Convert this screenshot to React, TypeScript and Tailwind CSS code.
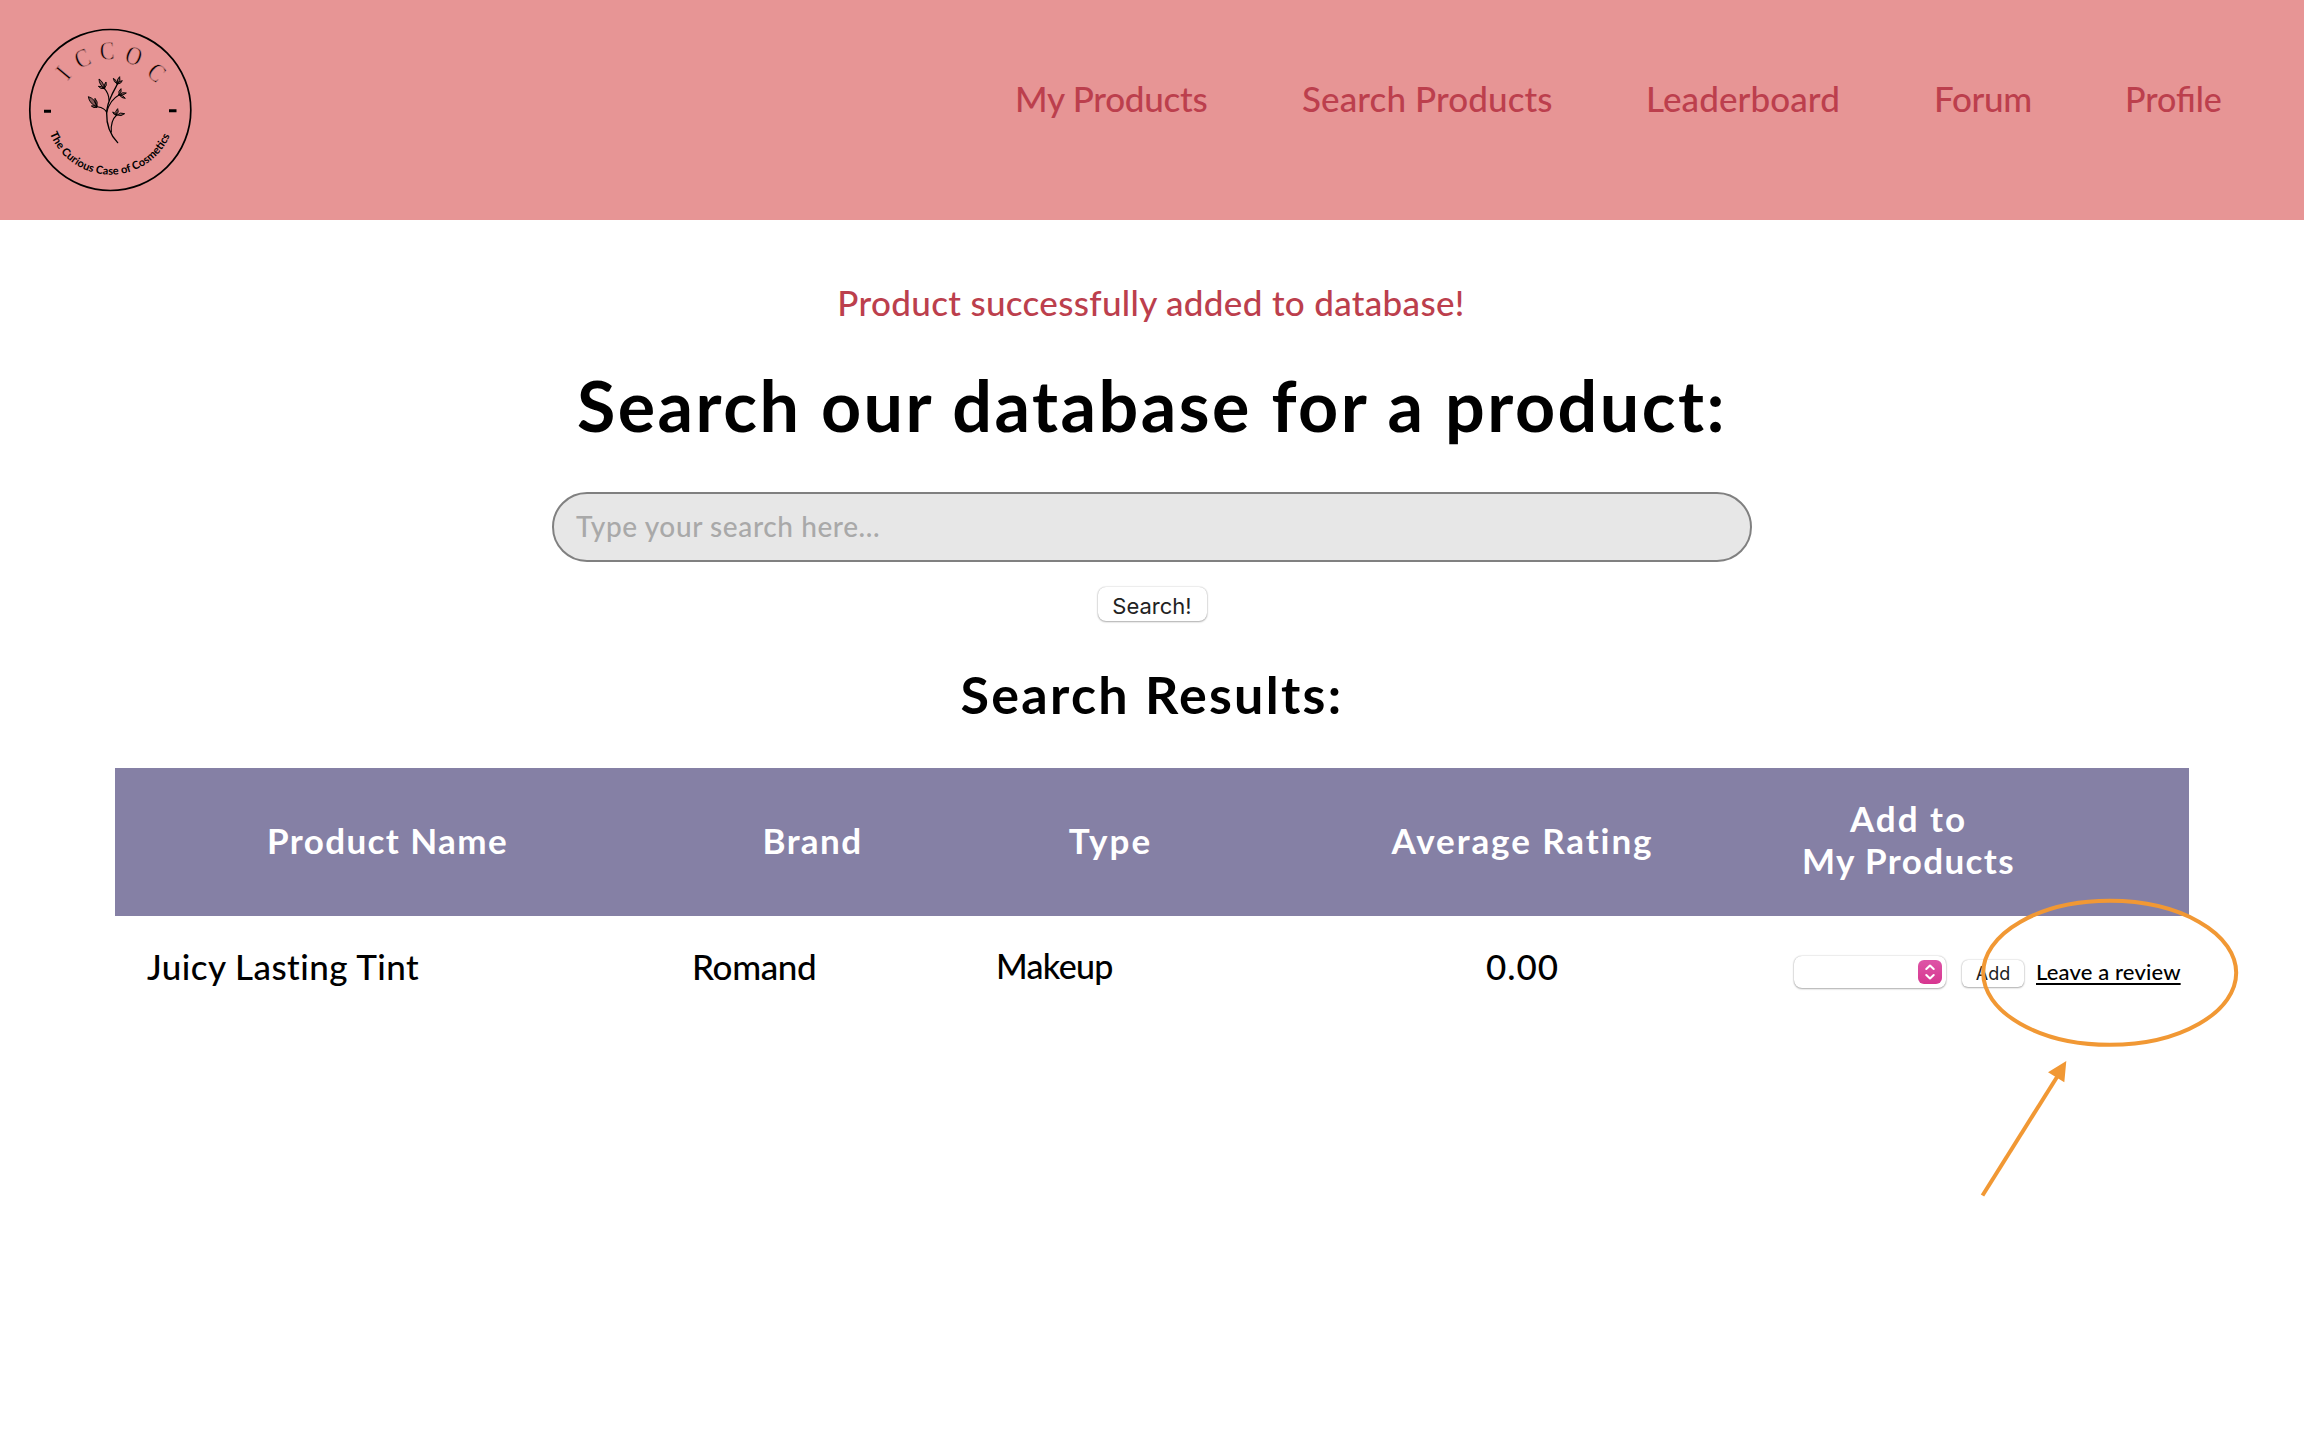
const navItems = [
  { label: "My Products", cls: "w-[287px] tracking-[-0.25px]" },
  { label: "Search Products", cls: "w-[344px] tracking-[0.1px]" },
  { label: "Leaderboard", cls: "w-[288px] tracking-[0.1px]" },
  { label: "Forum", cls: "w-[191px] tracking-[-0.3px]" },
  { label: "Profile", cls: "w-[179px] pt-px text-[34px]" },
];

const leaf = (x1: number, y1: number, x2: number, y2: number, w: number) => {
  const mx = (x1 + x2) / 2;
  const my = (y1 + y2) / 2;
  const len = Math.hypot(x2 - x1, y2 - y1);
  const px = (-(y2 - y1) / len) * w;
  const py = ((x2 - x1) / len) * w;
  return `M${x1} ${y1}Q${mx + px} ${my + py} ${x2} ${y2}Q${mx - px} ${my - py} ${x1} ${y1}Z`;
};

const leaves = [
  leaf(50, 115, 25, 86, 12),
  leaf(51, 114, 45, 91, 7),
  leaf(50, 118, 34, 114, 6),
  leaf(72, 60, 57, 33, 8),
  leaf(74, 60, 78, 42, 6),
  leaf(72, 62, 55, 55, 6),
  leaf(111, 47, 100, 31, 6),
  leaf(113, 46, 119, 26, 8),
  leaf(113, 48, 127, 38, 6),
  leaf(117, 80, 123, 62, 7),
  leaf(118, 80, 139, 75, 7),
  leaf(118, 81, 136, 91, 6),
  leaf(108, 141, 98, 132, 5),
  leaf(109, 140, 113, 122, 8),
  leaf(111, 141, 134, 137, 8),
];

const monogram: [string, string][] = [
  ["I", "translate(63.5 73) rotate(-50)"],
  ["C", "translate(82.5 58.5) rotate(-24)"],
  ["C", "translate(107 51) rotate(-3)"],
  ["O", "translate(133.8 56) rotate(20)"],
  ["C", "translate(156.5 72.5) rotate(42)"],
];

function Logo() {
  return (
    <svg viewBox="0 0 220 220" className="h-[220px] w-[220px] shrink-0" fill="none" stroke="#000">
      <circle cx="110.3" cy="110" r="80.5" strokeWidth="1.7" />
      {monogram.map(([letter, transform], i) => (
        <text
          key={i}
          transform={transform + " scale(0.84 1)"}
          y="8.4"
          textAnchor="middle"
          fill="#000"
          stroke="#e79595"
          strokeWidth="0.6"
          className="font-['Liberation_Serif',serif] text-[26px]"
        >
          {letter}
        </text>
      ))}
      <path d="M44 111.3h7M169 110.7h7.5" strokeWidth="3" />
      <path id="tagline-arc" d="M45.5 110a64.8 64.8 0 0 0 129.6 0" stroke="none" />
      <text fill="#000" stroke="none" className="font-['Lato',sans-serif] text-[11px] font-bold">
        <textPath href="#tagline-arc" startOffset="24" textLength="153">
          The Curious Case of Cosmetics
        </textPath>
      </text>
      <g transform="translate(80 68) scale(0.3333)" strokeLinecap="round" strokeLinejoin="round">
        <path d="M113 224C92 202 79 172 80 135C81 112 88 96 94 84C100 70 107 60 112 48" strokeWidth="4" />
        <path
          d="M80 134C77 124 66 118 52 116M87 97C87 82 81 70 73 61M80 132C87 108 100 90 117 81M94 192C92 168 98 152 110 141"
          strokeWidth="3.2"
        />
        {leaves.map((d) => (
          <path key={d} d={d} strokeWidth="2.8" fill="#000" fillOpacity="0.4" />
        ))}
      </g>
    </svg>
  );
}

function Annotation() {
  return (
    <svg
      viewBox="1970 890 280 320"
      className="pointer-events-none absolute left-[1855px] top-[122px] h-[320px] w-[280px]"
      fill="none"
      stroke="#f19834"
    >
      <ellipse cx="2109.7" cy="972.8" rx="126.5" ry="72" strokeWidth="4" />
      <path d="M1982.5 1195.5L2057 1077" strokeWidth="4" />
      <path d="M2066.3 1061L2048 1072.3L2064.3 1082.3Z" fill="#f19834" stroke="none" />
    </svg>
  );
}

const raised = "shadow-[0_0_1.5px_rgba(0,0,0,0.3),0_1px_2px_rgba(0,0,0,0.28)]";
const columns = "grid grid-cols-[545px_305px_291px_533px_239px_161px]";

export default function App() {
  return (
    <div className="min-h-[1440px] overflow-hidden bg-white font-['Lato',sans-serif] text-[35px] font-medium leading-[42px] text-black">
      <header className="flex h-[220px] bg-[#e79595]">
        <Logo />
        <nav className="ml-auto flex pt-[77px] text-[#bc3f4d]">
          {navItems.map((n) => (
            <a key={n.label} className={"whitespace-nowrap " + n.cls}>
              {n.label}
            </a>
          ))}
        </nav>
      </header>
      <main className="flex flex-col items-center">
        <p className="mt-[61px] -translate-x-px tracking-[0.33px] text-[#bc3f4d]">
          Product successfully added to database!
        </p>
        <h1 className="mt-10 text-[70px] font-bold leading-[84px] tracking-[2.5px]">
          Search our database for a product:
        </h1>
        <div className="mt-[45px] flex h-[70px] w-[1200px] items-center rounded-[35px] border-2 border-[#808080] bg-[#e7e7e7] pb-[3px] pl-[22px]">
          <span className="text-[28px] tracking-[0.6px] text-[#a9a9a9]">Type your search here...</span>
        </div>
        <button
          className={
            "mt-[25px] h-[34px] w-[109px] rounded-lg bg-white pt-[4px] font-['Inter',sans-serif] text-[22px] font-normal leading-[30px] text-[#222] " +
            raised
          }
        >
          Search!
        </button>
        <h2 className="mt-[42px] text-[52px] font-bold leading-[62px] tracking-[2.3px]">Search Results:</h2>
        <section className="relative mt-[43px] w-[2074px]">
          <div
            className={
              columns + " h-[148px] items-center bg-[#8580a5] pb-1 text-center font-bold tracking-[1.8px] text-white"
            }
          >
            <span className="tracking-[1.4px]">Product Name</span>
            <span className="tracking-[1.4px]">Brand</span>
            <span className="tracking-[2.1px]">Type</span>
            <span className="tracking-[1.9px]">Average Rating</span>
            <span className="pb-[2px]">
              <span className="tracking-[2px]">Add to</span>
              <br />
              <span className="tracking-[1.4px]">My Products</span>
            </span>
          </div>
          <div className={columns + " pt-[29px]"}>
            <span className="pl-8 tracking-[0.45px]">Juicy Lasting Tint</span>
            <span className="pl-8 tracking-[-0.35px]">Romand</span>
            <span className="pl-[31px] text-[34px] tracking-[-0.7px]">Makeup</span>
            <span className="text-center tracking-[1px]">0.00</span>
            <div className="col-span-2 flex h-[54px] items-center pl-[5px]">
              <div className={"flex h-8 w-[152px] shrink-0 items-center justify-end rounded-lg bg-white pr-1 " + raised}>
                <svg viewBox="0 0 24 24" className="h-6 w-6 rounded-md bg-linear-to-b from-[#dd55a7] to-[#d73590]">
                  <path
                    d="M8.3 9L12 5.6L15.7 9M8.3 15L12 18.4L15.7 15"
                    fill="none"
                    stroke="#fff"
                    strokeWidth="2.1"
                    strokeLinecap="round"
                    strokeLinejoin="round"
                  />
                </svg>
              </div>
              <button
                className={
                  "ml-4 mt-[2px] h-[27px] w-[62px] shrink-0 rounded-md bg-white pt-px font-['Inter',sans-serif] text-[18px] font-normal leading-[26px] text-[#222] " +
                  raised
                }
              >
                Add
              </button>
              <a className="ml-[12px] whitespace-nowrap text-[22px] leading-7 tracking-[0.15px] underline decoration-[1.5px] underline-offset-[3px] [text-decoration-skip-ink:none]">
                Leave a review
              </a>
            </div>
          </div>
          <Annotation />
        </section>
      </main>
    </div>
  );
}
